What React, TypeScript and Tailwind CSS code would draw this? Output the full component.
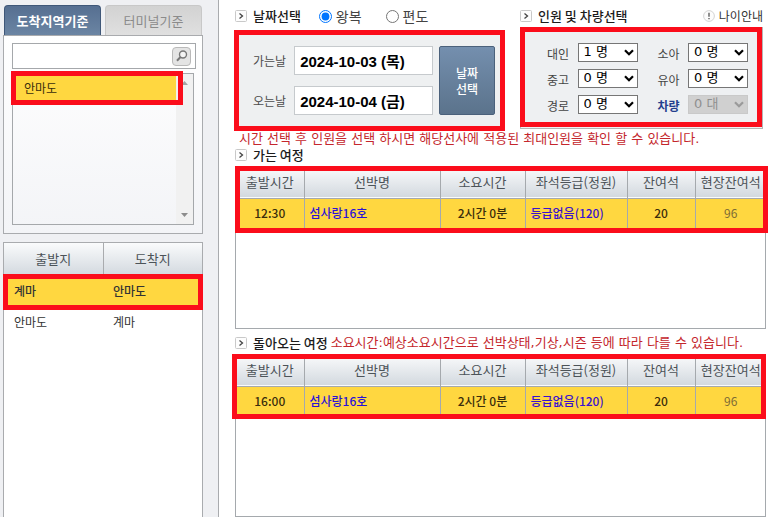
import { ComponentProps, ReactNode, useState } from "react";
import clsx from "clsx";

interface Sailing {
  time: string;
  ship: string;
  duration: string;
  grade: string;
  seats: number;
  onSite: number;
}

const outbound: Sailing[] = [
  { time: "12:30", ship: "섬사랑16호", duration: "2시간 0분", grade: "등급없음(120)", seats: 20, onSite: 96 },
];

const inbound: Sailing[] = [
  { time: "16:00", ship: "섬사랑16호", duration: "2시간 0분", grade: "등급없음(120)", seats: 20, onSite: 96 },
];

const routes = [
  { from: "계마", to: "안마도" },
  { from: "안마도", to: "계마" },
];

const passengers = [
  { id: "adult", label: "대인", value: 1 },
  { id: "child", label: "소아", value: 0 },
  { id: "student", label: "중고", value: 0 },
  { id: "infant", label: "유아", value: 0 },
  { id: "senior", label: "경로", value: 0 },
  { id: "vehicle", label: "차량", value: 0, disabled: true },
];

// Red guide frame drawn over the area the user has to fill in
const Marker = ({ className }: ComponentProps<"div">) => (
  <div
    className={clsx(
      "pointer-events-none absolute border-5 border-[#fb0d1b]",
      className,
    )}
  />
);

const SectionTitle = ({ children }: { children: ReactNode }) => (
  <h2 className="flex items-center gap-1.5 text-[13px] leading-4 font-medium whitespace-nowrap text-[#1c1c1c]">
    <svg viewBox="0 0 12 12" className="size-3 shrink-0">
      <rect x="0.5" y="0.5" width="11" height="11" rx="1" fill="#fdfdfd" stroke="#c9c9c9" />
      <path d="M4.5 3.5 7.5 6l-3 2.5" fill="none" stroke="#444" strokeWidth="1.3" />
    </svg>
    {children}
  </h2>
);

const SailingTable = ({ sailings }: { sailings: Sailing[] }) => (
  <table className="w-full table-fixed border-collapse text-center">
    <colgroup>
      <col className="w-[68px]" />
      <col className="w-[136px]" />
      <col className="w-[85px]" />
      <col className="w-[102px]" />
      <col className="w-[68px]" />
      <col className="w-[71px]" />
    </colgroup>
    <thead>
      <tr className="h-[31px] divide-x divide-[#a5a9ad] border-b border-[#a5a9ad] bg-linear-to-b from-[#fafbfc] to-[#d3d9df] text-[13px] leading-4 whitespace-nowrap text-[#4c5358]">
        <th className="font-normal">출발시간</th>
        <th className="font-normal">선박명</th>
        <th className="font-normal">소요시간</th>
        <th className="font-normal">좌석등급(정원)</th>
        <th className="font-normal">잔여석</th>
        <th className="font-normal">현장잔여석</th>
      </tr>
    </thead>
    <tbody>
      {sailings.map((sailing) => (
        <tr
          key={sailing.time}
          className="h-[30px] divide-x divide-[#a5a9ad] bg-[#ffd740] text-xs leading-4 font-medium whitespace-nowrap text-[#3a2d0c]"
        >
          <td>{sailing.time}</td>
          <td className="pl-[5px] text-left">
            <a href="#ship" className="text-[#2a12d8]">
              {sailing.ship}
            </a>
          </td>
          <td>{sailing.duration}</td>
          <td className="pl-[5px] text-left">
            <a href="#grade" className="text-[#3a12d0]">
              {sailing.grade}
            </a>
          </td>
          <td>{sailing.seats}</td>
          <td className="font-normal text-[#7d6b35]">{sailing.onSite}</td>
        </tr>
      ))}
    </tbody>
  </table>
);

const Sidebar = () => {
  const [keyword, setKeyword] = useState("");

  return (
    <aside className="flex w-[219px] shrink-0 flex-col border-r border-[#a9abae] bg-[#eff0f3] pt-[5px] pr-[15px] pl-[3px]">
      <div className="flex gap-1 px-px text-[13px] leading-4">
        <button className="h-[30px] flex-1 rounded-t-sm border border-b-0 border-[#3f5778] bg-linear-to-b from-[#566f91] to-[#6b85a3] font-bold text-white">
          도착지역기준
        </button>
        <button className="h-[30px] flex-1 rounded-t-sm border border-b-0 border-[#c8c8c8] bg-linear-to-b from-[#d2d2d2] to-[#e0e0e0] text-[#8b8b8b]">
          터미널기준
        </button>
      </div>

      <div className="border border-[#a9abae] bg-linear-to-b from-white to-[#f3f4f7] pt-[7px] pr-1.5 pb-2 pl-2">
        <form className="flex h-[26px] items-center border border-[#a5a8ab] bg-white pr-1">
          <input
            aria-label="도착지역 검색"
            className="h-full min-w-0 flex-1 px-1 text-xs outline-none"
            value={keyword}
            onChange={(e) => setKeyword(e.target.value)}
          />
          <button
            type="button"
            aria-label="검색"
            className="flex size-[19px] items-center justify-center rounded-sm border border-[#b9b9b9] bg-[#e4e4e4]"
          >
            <svg viewBox="0 0 14 14" className="size-3.5" fill="none" stroke="#777">
              <circle cx="8" cy="5.5" r="3.5" strokeWidth="1.4" fill="#f4f4f4" />
              <path d="M5.5 8 2 11.8" strokeWidth="2" />
            </svg>
          </button>
        </form>

        <div className="relative mt-1 mr-0.5 flex h-[152px] border border-[#a5a8ab]">
          <ul className="flex-1 text-xs leading-4 text-[#3a2d0c]">
            <li className="flex h-7 items-center bg-[#ffd740] pl-[11px]">안마도</li>
          </ul>
          <div className="flex w-[17px] flex-col items-center justify-between bg-[#f1f1f1] py-[7px]">
            <svg viewBox="0 0 7 4" className="h-1 w-[7px]">
              <path d="M0 4 3.5 0 7 4z" fill="#a3a3a3" />
            </svg>
            <svg viewBox="0 0 7 4" className="h-1 w-[7px]">
              <path d="M0 0h7L3.5 4z" fill="#8c8c8c" />
            </svg>
          </div>
          <Marker className="-top-[3px] right-2.5 -left-0.5 h-[34px]" />
        </div>
      </div>

      <div className="relative mt-2 flex-1 border border-b-0 border-[#a9abae] bg-white">
        <table className="w-full table-fixed border-collapse">
          <thead>
            <tr className="h-8 divide-x divide-[#a9abae] bg-linear-to-b from-[#fafbfc] to-[#d3d9df] text-[13px] leading-4 text-[#4c5358]">
              <th className="font-normal">출발지</th>
              <th className="font-normal">도착지</th>
            </tr>
          </thead>
          <tbody className="text-xs leading-4 text-[#333]">
            {routes.map((route, index) => (
              <tr
                key={route.from}
                className={index === 0 ? "h-8 bg-[#ffd740] font-medium" : "h-[30px]"}
              >
                <td className="pl-2.5">{route.from}</td>
                <td className="pl-2.5">{route.to}</td>
              </tr>
            ))}
          </tbody>
        </table>
        <Marker className="-right-px -left-px top-[31px] h-9" />
      </div>
    </aside>
  );
};

const DatePanel = () => (
  <section className="w-[270px]">
    <div className="flex h-[14px] items-center">
      <SectionTitle>날짜선택</SectionTitle>
      <label className="ml-[18px] flex items-center gap-1 text-sm leading-4 text-[#444]">
        <input type="radio" name="trip" defaultChecked className="size-[13px]" />
        왕복
      </label>
      <label className="ml-6 flex items-center gap-1 text-sm leading-4 text-[#444]">
        <input type="radio" name="trip" className="size-[13px]" />
        편도
      </label>
    </div>
    <div className="relative mt-[7px] -ml-px flex h-[101px] items-center gap-1.5 border border-[#b5b5b5] bg-[#eef0f1] pr-[9px] pl-[18px]">
      <div className="flex min-w-0 flex-1 flex-col gap-[11px]">
        <label className="flex items-center gap-2 text-xs leading-4 whitespace-nowrap text-[#4c4c4c]">
          가는날
          <input
            readOnly
            value="2024-10-03 (목)"
            className="h-[29px] min-w-0 flex-1 border border-[#c6cacd] bg-white px-[5px] font-['Liberation_Sans','Noto_Sans_CJK_KR',sans-serif] text-[15px] font-bold text-black"
          />
        </label>
        <label className="flex items-center gap-2 text-xs leading-4 whitespace-nowrap text-[#4c4c4c]">
          오는날
          <input
            readOnly
            value="2024-10-04 (금)"
            className="h-[29px] min-w-0 flex-1 border border-[#c6cacd] bg-white px-[5px] font-['Liberation_Sans','Noto_Sans_CJK_KR',sans-serif] text-[15px] font-bold text-black"
          />
        </label>
      </div>
      <button className="h-[69px] w-14 rounded-xs border border-[#4b617b] bg-linear-to-b from-[#748fae] to-[#5b738c] px-3 text-xs leading-4 font-medium text-white">
        날짜 선택
      </button>
      <Marker className="-inset-px" />
    </div>
  </section>
);

const PassengerPanel = () => (
  <section className="w-[243px]">
    <div className="flex h-[14px] items-center justify-between">
      <SectionTitle>인원 및 차량선택</SectionTitle>
      <a
        href="#age"
        className="flex items-center gap-1 text-xs leading-4 whitespace-nowrap text-[#333]"
      >
        <svg viewBox="0 0 12 12" className="size-3">
          <circle cx="6" cy="6" r="5.4" fill="#fcfcfc" stroke="#d4d4d4" />
          <path d="M6 2.8v4M6 8v1.3" stroke="#555" strokeWidth="1.3" />
        </svg>
        나이안내
      </a>
    </div>
    <div className="relative mt-1 border border-[#b5b5b5] bg-[#eef0f2] p-3.5">
      <div className="grid grid-cols-2 gap-x-5 gap-y-1.5 pl-3">
        {passengers.map(({ id, label, value, disabled }) => (
          <div key={id} className="flex items-center justify-between">
            <label
              htmlFor={id}
              className={clsx(
                "pt-1 text-xs leading-4",
                disabled ? "font-bold text-[#24408e]" : "text-[#444]",
              )}
            >
              {label}
            </label>
            <div className="relative">
              <select
                id={id}
                defaultValue={value}
                disabled={disabled}
                className={clsx(
                  "block h-[19px] w-[60px] appearance-none border pl-[5px] font-['DejaVu_Sans','Noto_Sans_CJK_KR',sans-serif] text-[13px] leading-4",
                  disabled
                    ? "border-[#c9c9c9] bg-[#d0d0d0] text-[#8f8f8f]"
                    : "border-[#767676] bg-white text-black",
                )}
              >
                {[0, 1, 2, 3, 4].map((count) => (
                  <option key={count} value={count}>
                    {count} {disabled ? "대" : "명"}
                  </option>
                ))}
              </select>
              <svg
                viewBox="0 0 10 7"
                fill="none"
                strokeWidth="2.2"
                className={clsx(
                  "pointer-events-none absolute top-1.5 right-1 h-[7px] w-2.5",
                  disabled ? "stroke-[#9a9a9a]" : "stroke-black",
                )}
              >
                <path d="M1 1.2 5 5.2 9 1.2" />
              </svg>
            </div>
          </div>
        ))}
      </div>
      <Marker className="-top-px right-0 bottom-px -left-px" />
    </div>
  </section>
);

export default function App() {
  return (
    <div className="flex min-h-screen bg-white font-['Noto_Sans_CJK_KR',sans-serif]">
      <Sidebar />
      <main className="flex min-w-0 flex-1 flex-col pt-[9px] pr-0.5 pl-4">
        <div className="flex justify-between pr-[3px]">
          <DatePanel />
          <PassengerPanel />
        </div>
        <p className="pl-1 font-['DejaVu_Sans','Noto_Sans_CJK_KR',sans-serif] text-[13px] leading-4 whitespace-nowrap text-[#c4262c]">
          시간 선택 후 인원을 선택 하시면 해당선사에 적용된 최대인원을 확인 할 수
          있습니다.
        </p>
        <SectionTitle>가는 여정</SectionTitle>

        <div className="relative mt-[3px] h-[163px] border border-[#a5a9ad]">
          <SailingTable sailings={outbound} />
          <Marker className="-top-px -right-[3px] -left-px h-[67px]" />
        </div>

        <div className="mt-1.5 flex items-center gap-[3px]">
          <SectionTitle>돌아오는 여정</SectionTitle>
          <p className="font-['DejaVu_Sans','Noto_Sans_CJK_KR',sans-serif] text-[13px] leading-4 whitespace-nowrap text-[#c4262c]">
            소요시간:예상소요시간으로 선박상태,기상,시즌 등에 따라 다를 수
            있습니다.
          </p>
        </div>
        <div className="relative mt-[3px] flex-1 border border-[#a5a9ad]">
          <SailingTable sailings={inbound} />
          <Marker className="-top-px -right-px -left-1 h-[65px]" />
        </div>
      </main>
    </div>
  );
}
